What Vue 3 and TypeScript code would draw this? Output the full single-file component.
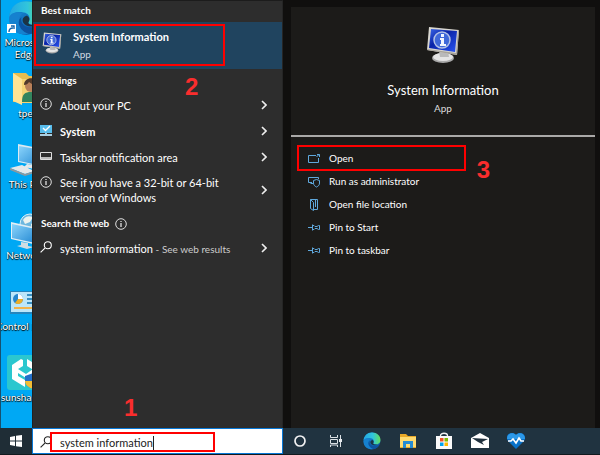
<script setup lang="ts">
import { ref } from 'vue'

interface Setting {
  icon: 'info' | 'system' | 'taskbar'
  label: string
  strong?: boolean
}

const query = ref('system information')

const desktopIcons = [
  { id: 'edge', label: 'Microsoft\nEdge' },
  { id: 'user', label: 'tpe' },
  { id: 'pc', label: 'This PC' },
  { id: 'network', label: 'Network' },
  { id: 'control', label: 'Control Panel' },
  { id: 'sunshare', label: 'sunshare' },
]

const settings: Setting[] = [
  { icon: 'info', label: 'About your PC' },
  { icon: 'system', label: 'System', strong: true },
  { icon: 'taskbar', label: 'Taskbar notification area' },
  { icon: 'info', label: 'See if you have a 32-bit or 64-bit version of Windows' },
]

const actions = [
  { id: 'open', label: 'Open' },
  { id: 'admin', label: 'Run as administrator' },
  { id: 'folder', label: 'Open file location' },
  { id: 'pin', label: 'Pin to Start' },
  { id: 'pin', label: 'Pin to taskbar' },
]
</script>

<template>
  <div class="screen">
    <svg class="defs" width="0" height="0" aria-hidden="true">
      <defs>
        <linearGradient id="edgeBlue" x1="0" y1="0" x2="1" y2="1">
          <stop offset="0" stop-color="#1795e0" />
          <stop offset="1" stop-color="#0c4f9e" />
        </linearGradient>
        <linearGradient id="edgeGreen" x1="0" y1="0" x2="1" y2="0">
          <stop offset="0" stop-color="#22a7e4" />
          <stop offset="0.55" stop-color="#31c5dc" />
          <stop offset="1" stop-color="#63df5b" />
        </linearGradient>
        <linearGradient id="screenBlue" x1="0" y1="0" x2="1" y2="1">
          <stop offset="0" stop-color="#3b66e8" />
          <stop offset="0.4" stop-color="#0a24a8" />
          <stop offset="1" stop-color="#2a55f2" />
        </linearGradient>
        <linearGradient id="glass" x1="0" y1="0" x2="1" y2="1">
          <stop offset="0" stop-color="#8bd4fb" />
          <stop offset="1" stop-color="#2187d2" />
        </linearGradient>
        <symbol id="edge" viewBox="0 0 32 32">
          <circle cx="16" cy="16" r="15" fill="url(#edgeBlue)" />
          <path d="M1 15C2 6 8 1 16 1c9 0 15 6 15 13 0 5-4 8-8 8-3 0-5-1-5-3 2-1 2-7-4-8C8 10 3 11 1 15Z" fill="url(#edgeGreen)" />
          <path d="M1 16c2-5 8-6 12-4-5 3-5 15 7 17-9 5-20-3-19-13Z" fill="#1681cf" />
          <path d="M12 15c-2 7 5 12 17 8-3 5-7 7-11 7-8-3-11-11-6-15Z" fill="#0d529f" />
          <path d="M17 14c3 2 2 5 1 6 0 2 4 3 8 2-5 3-13 1-13-4 0-2 2-4 4-4Z" fill="#1b3445" />
        </symbol>
        <symbol id="monitorInfo" viewBox="0 0 34 38">
          <ellipse cx="17" cy="32" rx="11" ry="5" fill="#a9a9a9" />
          <ellipse cx="17" cy="31" rx="10" ry="4" fill="#e4e4e4" />
          <path d="M13 25h9l1 6H14Z" fill="#b9b9b9" />
          <path d="M3 1 33 4 31 29 1 24Z" fill="#d9d7d0" />
          <path d="M33 4 31 29 1 24v-1l29 4 2-23Z" fill="#a7a39b" />
          <path d="M5 3 31 5 29 26 3 22Z" fill="url(#screenBlue)" />
          <circle cx="16" cy="14" r="8" fill="#4068d9" stroke="#b3c1e6" stroke-width="1.5" />
          <path d="M15 8h3v3h-3ZM14 12h4v6h2v2h-6v-2h1v-4h-1Z" fill="#f2f5ff" />
        </symbol>
        <symbol id="info" viewBox="0 0 12 12">
          <circle cx="6" cy="6" r="5.3" fill="none" stroke="#dedede" />
          <path d="M6 5v4M6 3v1" stroke="#eee" stroke-width="1.2" />
        </symbol>
        <symbol id="system" viewBox="0 0 12 12">
          <path d="M0 1h12v8H0Z" fill="#58bdec" />
          <path d="M3 4 5.5 6.5 10 2" fill="none" stroke="#fff" stroke-width="1.4" />
          <path d="M5 9h2v1h5v2H0v-2h5Z" fill="#a9cfe2" />
        </symbol>
        <symbol id="taskbar" viewBox="0 0 12 12">
          <path d="M.5 2.5h11v7H.5Z" fill="none" stroke="#ddd" />
          <path d="M1 7h10v2H1Z" fill="#bbb" />
        </symbol>
        <symbol id="search" viewBox="0 0 12 12">
          <circle cx="7.8" cy="4.2" r="3.5" fill="none" stroke="currentColor" stroke-width="1.1" />
          <path d="M5.2 6.8.6 11.4" stroke="currentColor" stroke-width="1.1" />
        </symbol>
        <symbol id="open" viewBox="0 0 12 12">
          <path d="M8 2.5H.5v7h10V5M8.5 4 11 1.5M9 1.5h2.5V4" fill="none" stroke="#5fa8dc" />
        </symbol>
        <symbol id="admin" viewBox="0 0 12 12">
          <path d="M5 7.500H2.500M.5 6.500v-5h10V3M.5 6.500H4" fill="none" stroke="#5fa8dc" />
          <path d="M8.500 3.500 11.500 4.500V7c0 2-1 3-3 4-2-1-3-2-3-4V4.500Z" fill="#1c1b19" stroke="#5fa8dc" />
        </symbol>
        <symbol id="folder" viewBox="0 0 12 12">
          <path d="M2.500.5h7v10H6M2.500.5v9l3 2v-8l-3-3M7.500 8V.5" fill="none" stroke="#5fa8dc" />
        </symbol>
        <symbol id="pin" viewBox="0 0 12 12">
          <path d="M0 5.500h4.500M4.500 2.500v6M4.500 3.500H6l1 1h2l1.500-1h1v4h-1L9 6.500H7l-1 1H4.500" fill="none" stroke="#5fa8dc" />
        </symbol>
        <symbol id="user" viewBox="0 0 36 36">
          <path d="M5 2h13l3 3h12v26H5Z" fill="#e8bd4e" />
          <path d="M5 2 14 8v26L5 30Z" fill="#ffe394" />
          <path d="M14 8h19v24H14Z" fill="#f6d373" />
          <circle cx="23" cy="15" r="6" fill="#b88059" />
          <path d="M16 14c0-9 14-9 14 0-4 0-7-1-9-3-1 2-3 3-5 3Z" fill="#51392b" />
          <path d="M14 31c0-8 3-10 9-10s9 3 9 10Z" fill="#32845e" />
        </symbol>
        <symbol id="pc" viewBox="0 0 36 36">
          <path d="m10 2 25 5v18l-25-5Z" fill="#dceaf1" />
          <path d="m11 4 23 4v16l-23-5Z" fill="url(#glass)" />
          <path d="m19 22 7 1v4l-10-2ZM2 26l12-3 12 6-9 3Z" fill="#e5e8ea" />
          <path d="m2 26 15 6 9-3v2l-9 3L2 28Z" fill="#8c989e" />
        </symbol>
        <symbol id="network" viewBox="0 0 36 36">
          <circle cx="22" cy="11" r="10" fill="#6db7df" stroke="#d8eef7" />
          <path d="M15 7c3-5 7-4 10-3l-3 5-5 2ZM23 11l7-3c2 6-2 9-6 11Z" fill="#edf3ef" />
          <path d="M3 9 29 15v17L3 26Z" fill="#e1eef5" />
          <path d="m4 11 24 5v14L4 25Z" fill="url(#glass)" />
          <path d="m13 29 7 1v3l6 1-7 2-10-3 4-1Z" fill="#cfdde2" />
        </symbol>
        <symbol id="control" viewBox="0 0 36 36">
          <path d="M2 7h32v23H2Z" fill="#2685bc" />
          <path d="M3 8h30v20H3Z" fill="#bce6f9" />
          <circle cx="10" cy="15" r="5" fill="#2686cd" />
          <path d="M10 15v-5a5 5 0 0 1 5 5Z" fill="#fff" />
          <path d="M10 15h5a5 5 0 0 1-8 4Z" fill="#ecae28" />
          <path d="M19 11h10M19 15h10M19 19h10" stroke="#398fc0" stroke-width="2" />
          <path d="M6 24h20" stroke="#f2b34a" stroke-width="2" />
        </symbol>
        <symbol id="sunshare" viewBox="0 0 36 36">
          <rect width="34" height="35" rx="3" fill="#2bc7cf" />
          <path d="M14 4 5 10v14l13 8v-7l-7-4v-7l5-3V5ZM20 4l10 6v8l-5 3v-7l-5-3ZM11 14l8 5 7-5v4l-7 5-8-5Z" fill="#fff" />
          <path d="m26 18 8 2v6c0 4-4 6-8 8-5-2-8-4-8-8v-5Z" fill="#2370ca" />
          <path d="M26 26h-8c0 4 3 6 8 8ZM26 18v8h8v-6Z" fill="#f2bd35" />
        </symbol>
        <symbol id="chevron" viewBox="0 0 6 10">
          <path d="m1 1 4 4-4 4" fill="none" stroke="#eee" stroke-width="1.6" />
        </symbol>
        <symbol id="explorer" viewBox="0 0 18 18">
          <path d="M1 2h6l2 2h8v12H1Z" fill="#e9a928" />
          <path d="M1 5h16v10H1Z" fill="#ffdb70" />
          <path d="M4 9h10v7h-3v-4H7v4H4Z" fill="#258bd2" />
        </symbol>
        <symbol id="store" viewBox="0 0 18 18">
          <path d="M5.500 5V3.500c0-3 7-3 7 0V5" fill="none" stroke="#f4f4f4" stroke-width="1.3" />
          <path d="M1 4h16v13H1Z" fill="#fafafa" />
          <path d="M5 6h3.500v3.500H5Z" fill="#f05125" />
          <path d="M9.500 6H13v3.500H9.500Z" fill="#7fba00" />
          <path d="M5 10.500h3.500V14H5Z" fill="#00a4ef" />
          <path d="M9.500 10.500H13V14H9.500Z" fill="#ffb900" />
        </symbol>
        <symbol id="mail" viewBox="0 0 18 18">
          <path d="M0 6 9 1l9 5v10H0Z" fill="#fff" />
          <path d="m1 6 16 1-6 3 2 3-6-3Z" fill="#20313e" />
        </symbol>
        <symbol id="health" viewBox="0 0 18 18">
          <path d="M9 17 1 9c-4-6 4-11 8-6 4-5 12 0 8 6Z" fill="#0872c9" />
          <path d="M0 7c0-6 6-7 9-4 3-3 9-2 9 4Z" fill="#2c98e8" />
          <path d="M1 9h3l2-2 3 4 3-5 2 3h3" fill="none" stroke="#fff" stroke-width="1.6" />
        </symbol>
        <symbol id="taskview" viewBox="0 0 14 14">
          <path d="M1.500 1v2.500h7V1M1.500 5.500h7v4h-7ZM1.500 13v-2h7v2M11.500 1v12" fill="none" stroke="#dbe1e5" />
          <path d="M10 5h3v3h-3Z" fill="#e6eaed" />
        </symbol>
        <symbol id="cortana" viewBox="0 0 14 14">
          <circle cx="7" cy="7" r="5" fill="none" stroke="#f2f2f2" stroke-width="1.7" />
        </symbol>
      </defs>
    </svg>

    <main class="workspace">
      <nav class="desktop" aria-label="Desktop">
        <a
          v-for="item in desktopIcons"
          :key="item.id"
          href="#"
          class="shortcut"
          :class="{ flush: item.id === 'sunshare' }"
        >
          <svg><use :href="'#' + item.id" /></svg>
          <svg v-if="item.id === 'edge'" class="arrow" viewBox="0 0 9 9">
            <path d="M0 0h9v9H0Z" fill="#fff" />
            <path d="M2 8c0-3 1-4 4-4M4 2h3v3" fill="none" stroke="#1764aa" stroke-width="1.4" />
          </svg>
          <span>{{ item.label }}</span>
        </a>
      </nav>

      <section class="results">
        <h2>Best match</h2>
        <button class="best">
          <svg><use href="#monitorInfo" /></svg>
          <span class="best-text"><strong>System Information</strong><small>App</small></span>
          <i class="mark"></i>
        </button>
        <span class="step step-two">2</span>
        <h2 class="settings-head">Settings</h2>
        <button v-for="item in settings" :key="item.label" class="row">
          <svg class="glyph"><use :href="'#' + item.icon" /></svg>
          <span class="row-label" :class="{ strong: item.strong }">{{ item.label }}</span>
          <svg class="chevron"><use href="#chevron" /></svg>
        </button>
        <h2 class="web-head">Search the web <svg class="glyph"><use href="#info" /></svg></h2>
        <button class="row">
          <svg class="glyph"><use href="#search" /></svg>
          <span class="row-label">system information <small>- See web results</small></span>
          <svg class="chevron"><use href="#chevron" /></svg>
        </button>
        <span class="step step-one">1</span>
      </section>

      <section class="details">
        <div class="card">
          <header>
            <svg><use href="#monitorInfo" /></svg>
            <h1>System Information</h1>
            <p>App</p>
          </header>
          <div class="actions">
            <button v-for="item in actions" :key="item.label">
              <svg><use :href="'#' + item.id" /></svg>
              <span>{{ item.label }}</span>
              <i v-if="item.id === 'open'" class="mark"></i>
            </button>
            <span class="step step-three">3</span>
          </div>
        </div>
      </section>
    </main>

    <footer class="taskbar">
      <button class="start" aria-label="Start">
        <svg viewBox="0 0 12 12">
          <path d="m0 2 5-1v4.500H0ZM6 .8 12 0v5.500H6ZM0 6.500h5V11l-5-1ZM6 6.500h6V12l-6-.8Z" fill="#fff" />
        </svg>
      </button>
      <label class="search">
        <svg class="glyph"><use href="#search" /></svg>
        <input v-model="query" type="text" aria-label="Search" spellcheck="false" />
        <i class="caret"></i>
        <i class="mark"></i>
      </label>
      <div class="pinned">
        <button aria-label="Cortana"><svg class="small"><use href="#cortana" /></svg></button>
        <button aria-label="Task view"><svg class="small"><use href="#taskview" /></svg></button>
        <button aria-label="Edge"><svg><use href="#edge" /></svg></button>
        <button aria-label="File Explorer"><svg><use href="#explorer" /></svg></button>
        <button aria-label="Store"><svg><use href="#store" /></svg></button>
        <button aria-label="Mail"><svg><use href="#mail" /></svg></button>
        <button aria-label="Health"><svg><use href="#health" /></svg></button>
      </div>
    </footer>
  </div>
</template>

<style>
body {
  margin: 0;
  background: #1c1b19;
}
</style>

<style scoped>
* {
  box-sizing: border-box;
}
.screen {
  display: grid;
  grid-template-rows: 1fr 27px;
  min-height: 100vh;
  overflow: hidden;
  font: 11px/15px Lato, "Open Sans", sans-serif;
  color: #fff;
}
.defs {
  position: absolute;
}
button {
  padding: 0;
  border: 0;
  background: none;
  color: inherit;
  font: inherit;
  text-align: left;
}
svg {
  display: block;
  flex: none;
}
h1,
h2,
p {
  margin: 0;
}
.workspace {
  display: grid;
  grid-template-columns: 32px minmax(200px, 251px) 1fr;
}
.desktop {
  overflow: hidden;
  border-left: 1px solid #17506f;
  background: #00a8f4;
}
.shortcut {
  position: relative;
  display: flex;
  flex-direction: column;
  align-items: center;
  width: 49px;
  height: 71px;
  color: #fff;
  font-size: 10px;
  line-height: 12px;
  text-align: center;
  text-decoration: none;
  white-space: pre;
  text-shadow: 0 1px 1px #000, 1px 0 1px #023;
}
.flush {
  align-items: flex-start;
}
.flush svg {
  margin-left: 6px;
}
.shortcut svg {
  width: 36px;
  height: 36px;
}
.shortcut .arrow {
  position: absolute;
  left: 6px;
  top: 24px;
  width: 9px;
  height: 9px;
}
.results {
  position: relative;
  border-top: 1px solid #1c1c1c;
  border-left: 1px solid #222;
  border-right: 1px solid #252525;
  background: #2d2d2d;
}
h2 {
  padding: 2px 8px 4px;
  font-size: 10px;
  font-weight: 700;
  line-height: 15px;
}
.best {
  position: relative;
  display: flex;
  width: 100%;
  height: 47px;
  padding: 7px 9px;
  gap: 11px;
  background: #20445f;
}
.best svg {
  width: 20px;
  height: 22px;
  margin-top: 3px;
}
.best-text {
  display: grid;
  align-content: start;
  grid-template-rows: 17px 15px;
}
strong,
.strong {
  font-weight: 700;
}
.best small {
  font-size: 10px;
  line-height: 17px;
  color: #d2dbe2;
}
.mark {
  position: absolute;
  border: 2px solid #f00;
}
.best .mark {
  inset: 2px 57px 3px 1px;
}
.settings-head {
  padding: 4px 8px 4px;
}
.row {
  display: flex;
  align-items: center;
  width: 100%;
  min-height: 26px;
  padding: 5px 15px 5px 7px;
  gap: 8px;
}
.row-label {
  flex: 1;
  padding-right: 12px;
}
.row small {
  font-size: 10px;
  line-height: 14px;
  color: #ccc;
}
.glyph {
  width: 12px;
  height: 12px;
}
.row .glyph {
  align-self: start;
  margin-top: 1px;
}
.chevron {
  width: 6px;
  height: 10px;
}
.web-head {
  display: flex;
  align-items: center;
  padding-top: 6px;
  gap: 6px;
}
.step {
  position: absolute;
  color: #f92d2d;
  font: bold 24px/24px "Liberation Sans", sans-serif;
}
.step-one {
  left: 91px;
  bottom: 8px;
}
.step-two {
  left: 152px;
  top: 74px;
}
.step-three {
  right: 105px;
  top: 21px;
}
.details {
  display: grid;
  padding: 7px 5px 0 8px;
  background: #100f0e;
}
.card {
  background: #1c1b19;
}
header {
  display: flex;
  flex-direction: column;
  align-items: center;
  height: 130px;
  padding-top: 19px;
  border-bottom: 2px solid #aaa9a8;
}
header svg {
  width: 34px;
  height: 38px;
}
h1 {
  margin-top: 16px;
  font-size: 13px;
  font-weight: 400;
  line-height: 20px;
}
header p {
  font-size: 10px;
  line-height: 17px;
  color: #ddd;
}
.actions {
  position: relative;
  display: grid;
  padding-top: 10px;
}
.actions button {
  position: relative;
  display: flex;
  align-items: center;
  height: 23px;
  padding: 0 17px;
  gap: 9px;
  font-size: 10px;
}
.actions svg {
  width: 12px;
  height: 12px;
}
.actions .mark {
  inset: -2px 129px -1px 6px;
}
.taskbar {
  display: grid;
  grid-template-columns: 32px minmax(200px, 251px) 1fr;
  border-bottom: 1px solid #12191e;
  background: #203340;
}
.start {
  display: grid;
  place-items: center;
  background: #1f2d36;
}
.start svg {
  width: 12px;
  height: 12px;
}
.search {
  position: relative;
  display: flex;
  align-items: center;
  padding: 2px 7px 0;
  gap: 8px;
  border: 1px solid #0878d7;
  background: #fff;
  color: #222;
}
.search input {
  min-width: 0;
  flex: 1;
  padding: 0;
  border: 0;
  outline: 0;
  background: none;
  color: #222;
  font: inherit;
}
.search .mark {
  inset: 3px 67px 1px 17px;
}
.caret {
  position: absolute;
  left: 120px;
  top: 7px;
  width: 1px;
  height: 14px;
  background: #222;
}
.pinned {
  display: flex;
  margin-left: -1px;
}
.pinned button {
  display: grid;
  place-items: center;
  width: 36px;
}
.pinned svg {
  width: 18px;
  height: 18px;
}
.pinned .small {
  width: 14px;
  height: 14px;
}
</style>
